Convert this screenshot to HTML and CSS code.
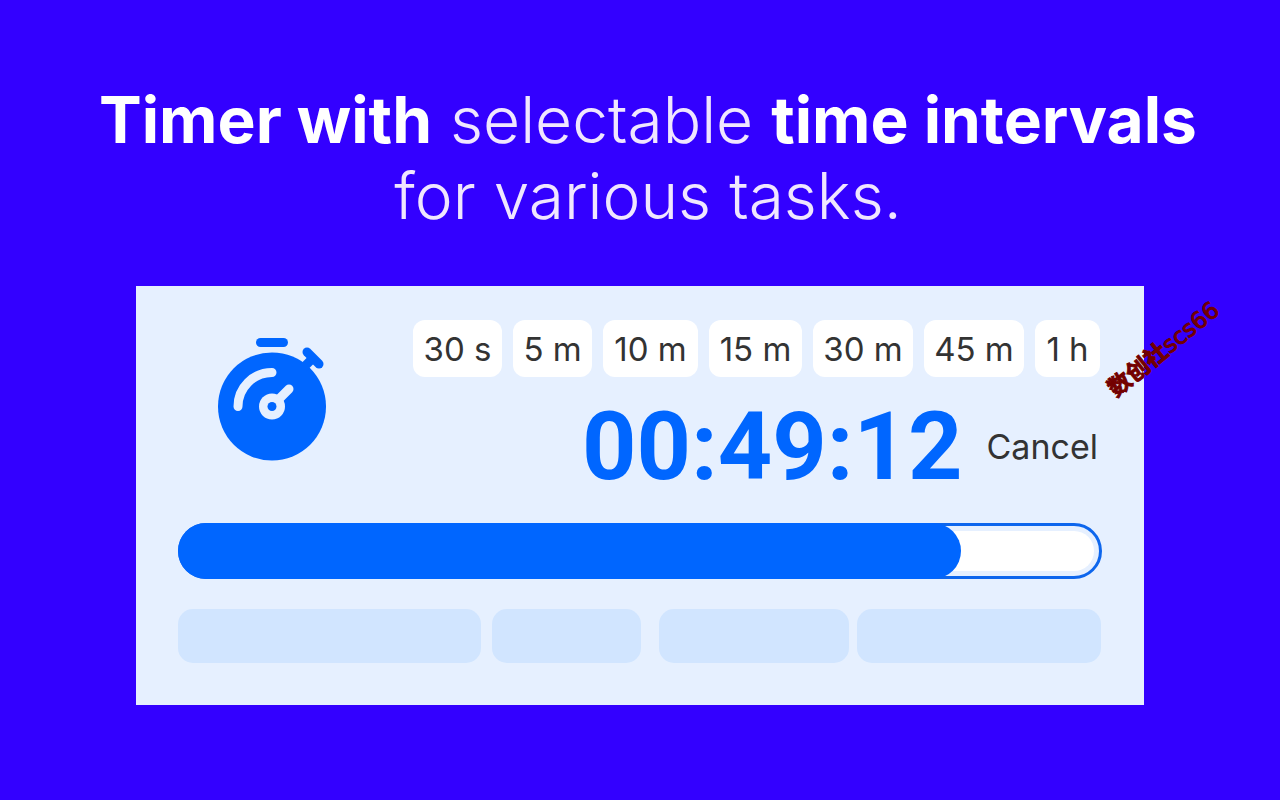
FILE: index.html
```html
<!DOCTYPE html>
<html lang="en">
<head>
<meta charset="utf-8">
<meta name="viewport" content="width=device-width, initial-scale=1">
<title>Timer</title>
<link rel="stylesheet" href="styles.css">
</head>
<body>
<main class="page">
  <h1 class="headline"><strong>Timer with</strong> selectable <strong>time intervals</strong><br>for various tasks.</h1>
  <section class="panel">
    <div class="top">
      <svg class="stopwatch" viewBox="218 338 108 123" aria-hidden="true">
        <rect x="256" y="338" width="32" height="9" rx="4.5" fill="#0066ff"/>
        <circle cx="272" cy="406.5" r="54" fill="#0066ff"/>
        <path d="M313 358L303 368" stroke="#0066ff" stroke-width="9"/>
        <path d="M307 352L319 364" stroke="#0066ff" stroke-width="9" stroke-linecap="round"/>
        <path d="M238 406.500A34 34 0 0 1 272 372.500M272 406L289 389" fill="none" stroke="#e6f0ff" stroke-width="9" stroke-linecap="round"/>
        <circle cx="272" cy="406.500" r="13" fill="#e6f0ff"/>
        <circle cx="272" cy="406.500" r="4.500" fill="#0066ff"/>
      </svg>
      <div class="controls">
        <div class="intervals">
          <button class="chip" type="button">30 s</button>
          <button class="chip" type="button">5 m</button>
          <button class="chip" type="button">10 m</button>
          <button class="chip" type="button">15 m</button>
          <button class="chip" type="button">30 m</button>
          <button class="chip" type="button">45 m</button>
          <button class="chip" type="button">1 h</button>
        </div>
        <div class="countdown">
          <span class="time" role="timer">00:49:12</span>
          <button class="cancel" type="button">Cancel</button>
        </div>
      </div>
    </div>
    <div class="progress" role="progressbar" aria-label="Time elapsed" aria-valuemin="0" aria-valuemax="100" aria-valuenow="85">
      <div class="track"></div>
      <div class="fill" style="width: 85.3%"></div>
    </div>
    <div class="blocks">
      <div class="block"></div>
      <div class="block"></div>
      <div class="block"></div>
      <div class="block"></div>
    </div>
    <span class="watermark"><b>数创社</b>scs66</span>
  </section>
</main>
</body>
</html>
```
FILE: styles.css
```css
* {
  box-sizing: border-box;
}

body {
  margin: 0;
  background: #3300ff;
  font-family: Inter, "Noto Sans CJK SC", sans-serif;
}

button {
  border: 0;
  padding: 0;
  font-family: inherit;
  color: #333333;
  cursor: pointer;
}

.page {
  padding: 82px 136px 95px;
}

.headline {
  margin: 0 -120px 52px -104px;
  font-size: 64px;
  line-height: 76px;
  font-weight: 300;
  text-align: center;
  color: #f0e6ff;
}

.headline strong {
  font-weight: 700;
  color: #ffffff;
}

.panel {
  position: relative;
  padding: 34px 42px 42px;
  background: #e6f0ff;
}

.top {
  display: flex;
  justify-content: space-between;
  align-items: flex-start;
}

.stopwatch {
  flex: none;
  width: 108px;
  height: 123px;
  margin: 18px 0 0 40px;
}

.controls {
  flex: 0 0 687px;
  margin-right: 2px;
}

.intervals {
  display: grid;
  grid-template-columns: 89fr 79fr 95fr 93fr 100fr 100fr 65fr;
  gap: 11px;
}

.chip {
  min-width: 0;
  height: 57px;
  border-radius: 12px;
  background: #ffffff;
  font-size: 33px;
  white-space: nowrap;
}

.countdown {
  display: flex;
  justify-content: flex-end;
  align-items: center;
  gap: 24px;
  height: 112px;
  margin: 14px 2px 20px 0;
}

.time {
  font-family: Roboto, sans-serif;
  font-size: 95px;
  line-height: 112px;
  font-weight: 700;
  color: #0066ff;
}

.cancel {
  background: none;
  font-size: 34px;
  line-height: 40px;
}

.progress {
  position: relative;
  height: 56px;
  padding: 5px;
  border: 3px solid #0d66ed;
  border-radius: 28px;
}

.track {
  height: 40px;
  border-radius: 20px;
  background: #ffffff;
}

.fill {
  position: absolute;
  inset: -3px auto -3px -3px;
  border-radius: 28px;
  background: #0066ff;
}

.blocks {
  display: grid;
  grid-template-columns: 303fr 11fr 149fr 18fr 190fr 8fr 244fr;
  margin: 30px 1px 0 0;
}

.block {
  height: 54px;
  border-radius: 15px;
  background: #d1e5ff;
}

.block:nth-child(2) {
  grid-column: 3;
}

.block:nth-child(3) {
  grid-column: 5;
}

.block:nth-child(4) {
  grid-column: 7;
}

.watermark {
  position: absolute;
  top: 50px;
  right: -87px;
  transform: rotate(-39deg);
  font-family: "DejaVu Sans", "Noto Sans CJK SC", sans-serif;
  font-size: 23px;
  line-height: 26px;
  font-weight: 400;
  color: #730000;
  -webkit-text-stroke: 1px #730000;
  white-space: nowrap;
}
```
